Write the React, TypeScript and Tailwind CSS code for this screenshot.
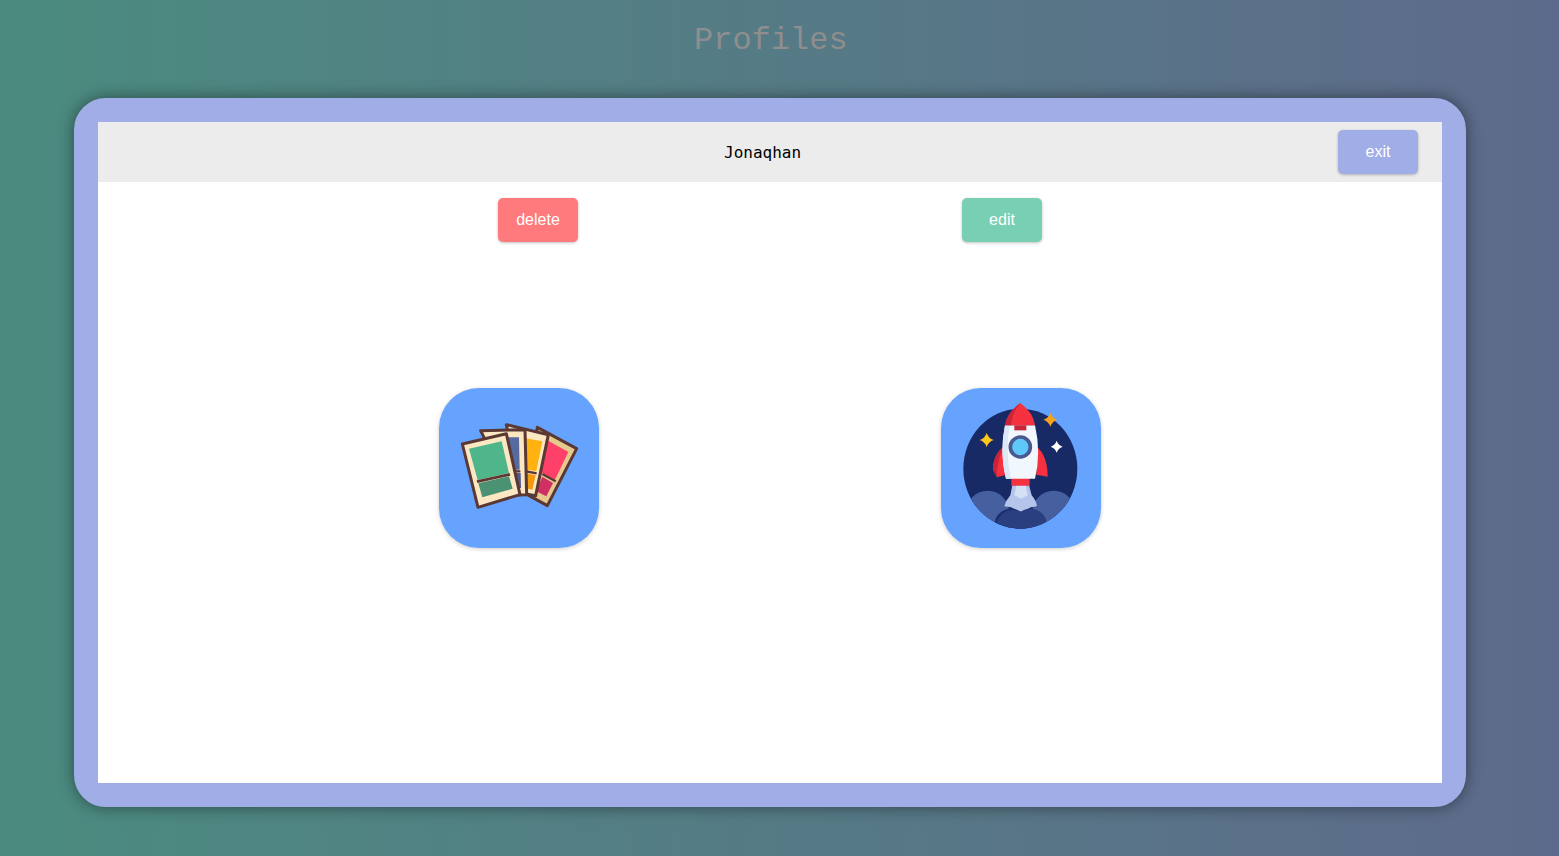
import React from 'react';

const outline = '#5b3834';
const cream = '#fbe8c3';

const CardsIcon = () => (
  <svg viewBox="30 30 480 480" className="w-[160px] h-[160px]">
    {/* back cards, right to left */}
    <g stroke={outline} strokeLinejoin="round">
      <polygon points="325,148 443,212 355,383 295,350" fill="#e6c98e" strokeWidth="9" />
      <polygon points="352,185 418,222 378,305 330,280" fill="#ff4069" strokeWidth="0" />
      <polygon points="340,296 372,315 352,355 322,340" fill="#cf2f63" strokeWidth="0" />
      <line x1="340" y1="288" x2="380" y2="310" strokeWidth="7" />
      <polygon points="232,140 358,170 320,353 275,345" fill={cream} strokeWidth="9" />
      <polygon points="285,180 340,190 322,280 280,272" fill="#ffb210" strokeWidth="0" />
      <polygon points="285,285 320,292 310,335 285,330" fill="#f29a10" strokeWidth="0" />
      <line x1="285" y1="279" x2="323" y2="286" strokeWidth="7" />
      <polygon points="155,158 288,155 293,350 250,352" fill={cream} strokeWidth="9" />
      <polygon points="225,178 270,178 272,275 235,275" fill="#566a9f" strokeWidth="0" />
      <polygon points="245,285 275,285 276,330 255,330" fill="#4a5a8f" strokeWidth="0" />
      <line x1="245" y1="280" x2="274" y2="280" strokeWidth="7" />
      {/* front card */}
      <polygon points="100,198 232,167 273,350 147,388" fill={cream} strokeWidth="9" />
      <polygon points="120,212 218,190 240,285 146,306" fill="#4fb58b" strokeWidth="0" />
      <polygon points="148,316 240,295 251,332 160,358" fill="#4a9273" strokeWidth="0" />
      <line x1="144" y1="311" x2="243" y2="289" strokeWidth="8" />
    </g>
  </svg>
);

const Star = ({ x, y, r, fill }: { x: number; y: number; r: number; fill: string }) => (
  <path
    d={`M${x} ${y - r} Q${x + r * 0.25} ${y - r * 0.25} ${x + r} ${y} Q${x + r * 0.25} ${y + r * 0.25} ${x} ${y + r} Q${x - r * 0.25} ${y + r * 0.25} ${x - r} ${y} Q${x - r * 0.25} ${y - r * 0.25} ${x} ${y - r}Z`}
    fill={fill}
  />
);

const RocketIcon = () => (
  <svg viewBox="30 30 480 480" className="w-[160px] h-[160px]">
    <defs>
      <clipPath id="rocket-disc">
        <ellipse cx="268" cy="272" rx="171" ry="180" />
      </clipPath>
    </defs>
    <ellipse cx="268" cy="272" rx="171" ry="180" fill="#182a66" />
    <g clipPath="url(#rocket-disc)">
      <circle cx="170" cy="402" r="64" fill="#46609f" />
      <circle cx="368" cy="402" r="64" fill="#46609f" />
      <path d="M244 322 H294 L302 352 Q316 368 318 385 L300 388 L270 402 L240 388 L220 385 Q224 368 238 352Z" fill="#b4c4ea" />
      <path d="M256 322 H284 L290 352 L270 362 L250 352Z" fill="#d6e0f5" />
      <circle cx="240" cy="442" r="50" fill="#1c2e6c" />
      <circle cx="246" cy="446" r="50" fill="#2a3f80" />
      <circle cx="298" cy="442" r="50" fill="#2a3f80" />
    </g>
    <rect x="241" y="300" width="55" height="23" fill="#f5303f" />
    <path d="M222 205 C195 220 186 250 186 275 L198 298 L226 290Z" fill="#f5303f" />
    <path d="M222 205 C195 220 186 250 186 275 L198 298 C198 260 205 230 222 205Z" fill="#c9243a" />
    <path d="M314 205 C340 220 350 260 350 296 L316 290Z" fill="#f5303f" />
    <path d="M222 142 H312 Q331 225 312 302 H225 Q205 225 222 142Z" fill="#f2f7fd" />
    <path d="M222 142 H236 Q222 225 240 302 H225 Q205 225 222 142Z" fill="#dce8f6" />
    <path d="M268 75 Q308 105 312 142 H222 Q228 105 268 75Z" fill="#f5303f" />
    <path d="M268 75 Q242 105 240 142 H222 Q228 105 268 75Z" fill="#c9243a" />
    <rect x="250" y="142" width="36" height="15" fill="#c9243a" />
    <circle cx="268" cy="207" r="30" fill="#5fc8fa" stroke="#4a5a90" strokeWidth="11" />
    <Star x={167} y={186} r={21} fill="#ffc61b" />
    <Star x={358} y={125} r={21} fill="#f7a21b" />
    <Star x={377} y={206} r={18} fill="#ffffff" />
  </svg>
);

const App: React.FC = () => {
  return (
    <div className="h-[856px] overflow-hidden bg-gradient-to-r from-[#4a8b7f] to-[#5d6a8b]">
      <h1 className="h-[98px] pt-[21px] pl-[694px] text-[32px] leading-[40px] font-normal text-[#8e8e8e] font-['Liberation_Mono',monospace]">
        Profiles
      </h1>
      <div className="ml-[74px] w-[1392px] h-[709px] border-[24px] border-[#a0ade6] rounded-[32px] bg-[#a0ade6] shadow-[0_0_16px_rgba(0,0,0,0.45)] font-['Liberation_Sans',sans-serif]">
        <div className="h-full bg-white">
          <div className="h-[60px] bg-[#ececec] flex items-center pl-[626px] pr-6">
            <span className="flex-1 pt-0.5 text-base text-black font-['DejaVu_Sans_Mono',monospace]">Jonaqhan</span>
            <button className="w-20 h-11 rounded-[5px] bg-[#a0ade6] text-white text-base shadow-[0_1px_3px_rgba(0,0,0,0.25)]">
              exit
            </button>
          </div>
          <div className="flex gap-[384px] pt-4 pl-[400px]">
            <button className="w-20 h-11 rounded-[5px] bg-[#ff7a7d] text-white text-base shadow-[0_1px_3px_rgba(0,0,0,0.25)]">
              delete
            </button>
            <button className="w-20 h-11 rounded-[5px] bg-[#78cfb4] text-white text-base shadow-[0_1px_3px_rgba(0,0,0,0.25)]">
              edit
            </button>
          </div>
          <div className="flex gap-[342px] mt-[146px] pl-[341px]">
            <div className="w-40 h-40 rounded-[40px] bg-[#65a3ff] shadow-[0_1px_4px_rgba(0,0,0,0.2)]">
              <CardsIcon />
            </div>
            <div className="w-40 h-40 rounded-[40px] bg-[#65a3ff] shadow-[0_1px_4px_rgba(0,0,0,0.2)]">
              <RocketIcon />
            </div>
          </div>
        </div>
      </div>
    </div>
  );
};

export default App;
